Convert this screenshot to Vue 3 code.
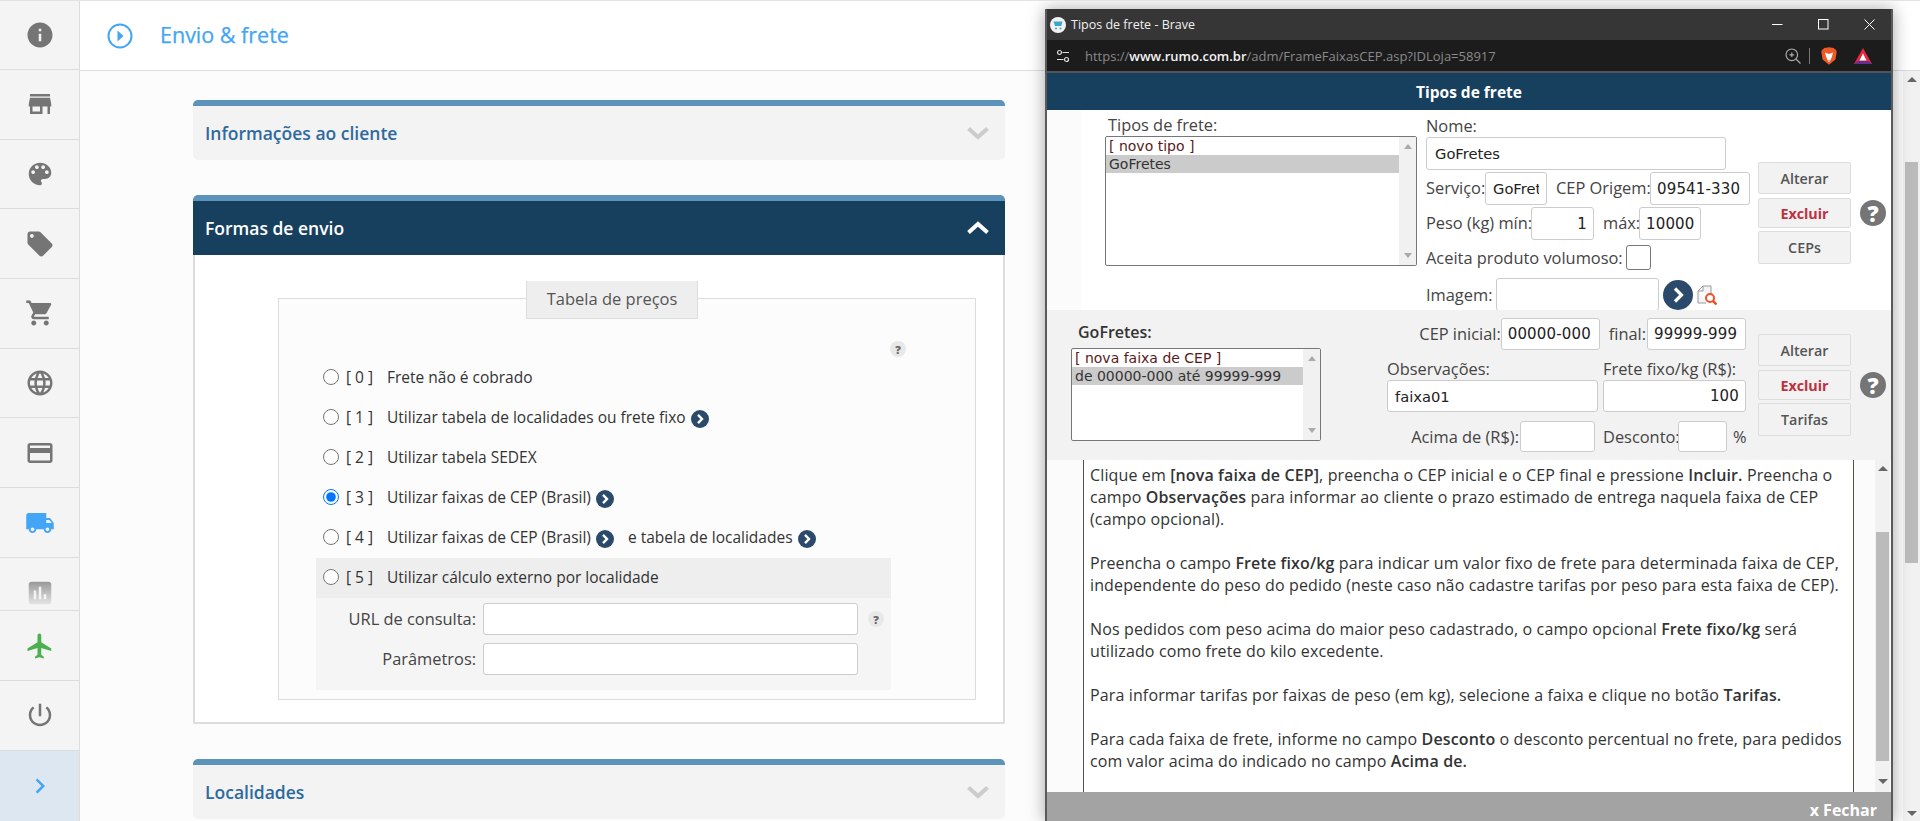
<script setup>
const navItems = [
  { d: 'M12 2C6.48 2 2 6.48 2 12s4.48 10 10 10 10-4.48 10-10S17.52 2 12 2zm1 15h-2v-6h2v6zm0-8h-2V7h2v2z', cls: 'first' },
  { d: 'M20 4H4v2h16V4zm1 10v-2l-1-5H4l-1 5v2h1v6h10v-6h4v6h2v-6h1zm-9 4H6v-4h6v4z' },
  { d: 'M12 3c-4.97 0-9 4.03-9 9s4.03 9 9 9c.83 0 1.5-.67 1.5-1.5 0-.39-.15-.74-.39-1.01-.23-.26-.38-.61-.38-.99 0-.83.67-1.5 1.5-1.5H16c2.76 0 5-2.24 5-5 0-4.42-4.03-8-9-8zm-5.5 9c-.83 0-1.5-.67-1.5-1.5S5.67 9 6.5 9 8 9.67 8 10.5 7.33 12 6.5 12zm3-4C8.67 8 8 7.33 8 6.5S8.67 5 9.5 5s1.5.67 1.5 1.5S10.33 8 9.5 8zm5 0c-.83 0-1.5-.67-1.5-1.5S13.67 5 14.5 5s1.5.67 1.5 1.5S15.33 8 14.5 8zm3 4c-.83 0-1.5-.67-1.5-1.5S16.67 9 17.5 9s1.5.67 1.5 1.5-.67 1.5-1.5 1.5z' },
  { d: 'M21.41 11.58l-9-9C12.05 2.22 11.55 2 11 2H4c-1.1 0-2 .9-2 2v7c0 .55.22 1.05.59 1.42l9 9c.36.36.86.58 1.41.58.55 0 1.05-.22 1.41-.59l7-7c.37-.36.59-.86.59-1.41 0-.55-.23-1.06-.59-1.42zM5.5 7C4.67 7 4 6.33 4 5.5S4.67 4 5.5 4 7 4.67 7 5.5 6.33 7 5.5 7z' },
  { d: 'M7 18c-1.1 0-1.99.9-1.99 2S5.9 22 7 22s2-.9 2-2-.9-2-2-2zM1 2v2h2l3.6 7.59-1.35 2.45c-.16.28-.25.61-.25.96 0 1.1.9 2 2 2h12v-2H7.42c-.14 0-.25-.11-.25-.25l.03-.12.9-1.63h7.45c.75 0 1.41-.41 1.75-1.03l3.58-6.49c.08-.14.12-.31.12-.48 0-.55-.45-1-1-1H5.21l-.94-2H1zm16 16c-1.1 0-1.99.9-1.99 2s.89 2 1.99 2 2-.9 2-2-.9-2-2-2z' },
  { d: 'M11.99 2C6.47 2 2 6.48 2 12s4.47 10 9.99 10C17.52 22 22 17.52 22 12S17.52 2 11.99 2zm6.93 6h-2.95c-.32-1.25-.78-2.45-1.38-3.56 1.84.63 3.37 1.91 4.33 3.56zM12 4.04c.83 1.2 1.48 2.53 1.91 3.96h-3.82c.43-1.43 1.08-2.76 1.91-3.96zM4.26 14C4.1 13.36 4 12.69 4 12s.1-1.36.26-2h3.38c-.08.66-.14 1.32-.14 2 0 .68.06 1.34.14 2H4.26zm.82 2h2.95c.32 1.25.78 2.45 1.38 3.56-1.84-.63-3.37-1.9-4.33-3.56zm2.95-8H5.08c.96-1.66 2.49-2.93 4.33-3.56C8.81 5.55 8.35 6.75 8.03 8zM12 19.96c-.83-1.2-1.48-2.53-1.91-3.96h3.82c-.43 1.43-1.08 2.76-1.91 3.96zM14.34 14H9.66c-.09-.66-.16-1.32-.16-2 0-.68.07-1.35.16-2h4.68c.09.65.16 1.32.16 2 0 .68-.07 1.34-.16 2zm.25 5.56c.6-1.11 1.06-2.31 1.38-3.56h2.95c-.96 1.65-2.49 2.93-4.33 3.56zM16.36 14c.08-.66.14-1.32.14-2 0-.68-.06-1.34-.14-2h3.38c.16.64.26 1.31.26 2s-.1 1.36-.26 2h-3.38z' },
  { d: 'M20 4H4c-1.11 0-1.99.89-1.99 2L2 18c0 1.11.89 2 2 2h16c1.11 0 2-.89 2-2V6c0-1.11-.89-2-2-2zm0 14H4v-6h16v6zm0-10H4V6h16v2z' },
  { d: 'M20 8h-3V4H3c-1.1 0-2 .9-2 2v11h2c0 1.66 1.34 3 3 3s3-1.34 3-3h6c0 1.66 1.34 3 3 3s3-1.34 3-3h2v-5l-3-4zM6 18.5c-.83 0-1.5-.67-1.5-1.5s.67-1.5 1.5-1.5 1.5.67 1.5 1.5-.67 1.5-1.5 1.5zm13.5-9l1.96 2.5H17V9.5h2.5zm-1.5 9c-.83 0-1.5-.67-1.5-1.5s.67-1.5 1.5-1.5 1.5.67 1.5 1.5-.67 1.5-1.5 1.5z', cls: 'blue' },
  { d: 'M19 3H5c-1.1 0-2 .9-2 2v14c0 1.1.9 2 2 2h14c1.1 0 2-.9 2-2V5c0-1.1-.9-2-2-2zM9 17H7v-7h2v7zm4 0h-2V7h2v10zm4 0h-2v-4h2v4z', cls: 'short' },
  { d: 'M21 16v-2l-8-5V3.5c0-.83-.67-1.5-1.5-1.5S10 2.67 10 3.5V9l-8 5v2l8-2.5V19l-2 1.5V22l3.5-1 3.5 1v-1.5L13 19v-5.5l8 2.5z', cls: 'green' },
  { d: 'M13 3h-2v10h2V3zm4.83 2.17l-1.42 1.42C17.99 7.86 19 9.81 19 12c0 3.87-3.13 7-7 7s-7-3.13-7-7c0-2.19 1.01-4.14 2.58-5.42L6.17 5.17C4.23 6.82 3 9.26 3 12c0 4.97 4.03 9 9 9s9-4.03 9-9c0-2.74-1.23-5.18-3.17-6.83z' },
  { d: 'M10 6L8.59 7.41 13.17 12l-4.58 4.59L10 18l6-6z', cls: 'last' }
]
const radios = [
  { n: 0, text: 'Frete não é cobrado' },
  { n: 1, text: 'Utilizar tabela de localidades ou frete fixo', arrow: true },
  { n: 2, text: 'Utilizar tabela SEDEX' },
  { n: 3, text: 'Utilizar faixas de CEP (Brasil)', arrow: true, checked: true },
  { n: 4, text: 'Utilizar faixas de CEP (Brasil)', arrow: true, extra: 'e tabela de localidades' },
  { n: 5, text: 'Utilizar cálculo externo por localidade', shade: true }
]
</script>

<template>
  <div class="page">
    <nav class="side">
      <div v-for="(it, i) in navItems" :key="i" class="nav" :class="it.cls">
        <svg viewBox="0 0 24 24" width="30" height="30"><defs><linearGradient id="fade" x1="0" y1="0" x2="0" y2="1"><stop offset="0" stop-color="#999"/><stop offset="1" stop-color="#e4e4e4"/></linearGradient></defs><path :d="it.d"/></svg>
      </div>
    </nav>

    <div class="main">
      <header class="top">
        <svg class="play" viewBox="0 0 26 26" width="26" height="26"><circle cx="13" cy="13" r="11.5" fill="none" stroke="#42a5f5" stroke-width="2"/><path d="M10.5 7.5 16.5 13l-6 5.5z" fill="#42a5f5"/></svg>
        <h1>Envio &amp; frete</h1>
      </header>
      <div class="below">
        <div class="content">
          <section class="panel">
            <div class="phead"><span>Informações ao cliente</span><svg class="chev" viewBox="0 0 24 14" width="24" height="14"><path d="M2.5 2.5 12 11l9.500-8.500" fill="none" stroke="#ccc" stroke-width="4"/></svg></div>
          </section>

          <section class="panel open">
            <div class="phead dark"><span>Formas de envio</span><svg class="chev" viewBox="0 0 24 14" width="24" height="14"><path d="M2.500 11.500 12 3l9.500 8.500" fill="none" stroke="#fff" stroke-width="4"/></svg></div>
            <div class="pbody">
              <div class="box">
                <div class="legend">Tabela de preços</div>
                <div class="qrow"><span class="q">?</span></div>
                <div v-for="r in radios" :key="r.n" class="rrow" :class="{ shade: r.shade }">
                  <input type="radio" name="tabela" :checked="r.checked">
                  <span class="num">[ {{ r.n }} ]</span>
                  <span>{{ r.text }}</span>
                  <svg v-if="r.arrow" class="arr" viewBox="0 0 18 18" width="18" height="18"><circle cx="9" cy="9" r="9" fill="#2b4a6b"/><path d="M7 4.800 11 9l-4 4.200" fill="none" stroke="#fff" stroke-width="2.400"/></svg>
                  <template v-if="r.extra">
                    <span class="extra">{{ r.extra }}</span>
                    <svg class="arr" viewBox="0 0 18 18" width="18" height="18"><circle cx="9" cy="9" r="9" fill="#2b4a6b"/><path d="M7 4.800 11 9l-4 4.200" fill="none" stroke="#fff" stroke-width="2.400"/></svg>
                  </template>
                </div>
                <div class="sub">
                  <div class="frow"><label>URL de consulta:</label><input class="fin" type="text"><span class="q small">?</span></div>
                  <div class="frow"><label>Parâmetros:</label><input class="fin" type="text"></div>
                </div>
              </div>
            </div>
          </section>

          <section class="panel">
            <div class="phead"><span>Localidades</span><svg class="chev" viewBox="0 0 24 14" width="24" height="14"><path d="M2.500 2.500 12 11l9.500-8.500" fill="none" stroke="#ccc" stroke-width="4"/></svg></div>
          </section>
        </div>
        <div class="mainbar">
          <i class="up"></i>
          <div class="mthumb"></div>
          <i class="down"></i>
        </div>
      </div>
    </div>

    <!-- popup window -->
    <div class="popup">
      <div class="titlebar">
        <svg viewBox="0 0 16 16" width="16" height="16"><circle cx="8" cy="8" r="8" fill="#f2f2f2"/><path d="M3.500 4.500h9l-1.200 4.500H5z" fill="#3ba7c6"/><circle cx="6" cy="11.500" r="1" fill="#3ba7c6"/><circle cx="10.500" cy="11.500" r="1" fill="#3ba7c6"/></svg>
        <span class="wtitle">Tipos de frete - Brave</span>
        <span class="grow"></span>
        <svg class="wc" viewBox="0 0 11 11" width="11" height="11"><path d="M0 5.500h10.500" stroke="#fff" stroke-width="1"/></svg>
        <svg class="wc" viewBox="0 0 11 11" width="11" height="11"><rect x=".5" y=".5" width="9.500" height="9.500" fill="none" stroke="#fff"/></svg>
        <svg class="wc" viewBox="0 0 11 11" width="11" height="11"><path d="M.5.500l10 10M10.500.500l-10 10" stroke="#fff"/></svg>
      </div>
      <div class="urlbar">
        <svg viewBox="0 0 14 14" width="14" height="14"><g fill="none" stroke="#ddd" stroke-width="1.200"><circle cx="3.500" cy="3.500" r="2"/><circle cx="10.500" cy="10.500" r="2"/><path d="M6.500 3.500H13M1 10.500h6.500"/></g></svg>
        <span class="url">https://<b>www.rumo.com.br</b>/adm/FrameFaixasCEP.asp?IDLoja=58917</span>
        <span class="grow"></span>
        <svg viewBox="0 0 16 16" width="16" height="16"><g fill="none" stroke="#aaa" stroke-width="1.200"><circle cx="6.800" cy="6.800" r="5.800"/><path d="M11 11l4.500 4.500M4.500 6.800h4.600M6.800 4.500v4.600"/></g></svg>
        <span class="sep"></span>
        <svg class="brave" viewBox="0 0 16 18" width="16" height="18"><path d="M3.500 1 8 .3 12.500 1 15 3l.7 2-1.300 7.500L8 17.700 1.600 12.500.3 5 1 3z" fill="#f15a22"/><path d="M4 5.500 8 7l4-1.500-1 4-1.500 3.500h-3L5 9.500z" fill="#fff"/><path d="M6.500 13.500 8 15l1.500-1.500z" fill="#fff"/></svg>
        <svg class="bat" viewBox="0 0 18 16" width="18" height="16"><path d="M9 0 18 16H0z" fill="#e8283c"/><path d="M0 16 3.500 13h11l3.500 3z" fill="#662d91"/><path d="M9 5.500 12.500 12.500h-7z" fill="#fff"/></svg>
      </div>
      <div class="phdr">Tipos de frete</div>

      <div class="upper">
        <div class="upper-in">
          <div class="lcol">
            <div class="ltitle">Tipos de frete:</div>
            <div class="list l1">
              <div class="items">
                <div class="opt">[ novo tipo ]</div>
                <div class="opt sel">GoFretes</div>
              </div>
              <div class="lbar"><i class="up"></i><i class="down"></i></div>
            </div>
          </div>
          <div class="fcol">
            <div class="flab">Nome:</div>
            <div class="line"><input class="tin w-name" value="GoFretes"></div>
            <div class="line"><span class="l-serv">Serviço:</span><input class="tin w-serv" value="GoFretes"><span class="l-cep">CEP Origem:</span><input class="tin w-cep nums" value="09541-330"></div>
            <div class="line"><span class="l-peso">Peso (kg) mín:</span><input class="tin w-min r nums" value="1"><span class="l-max">máx:</span><input class="tin w-max nums" value="10000"></div>
            <div class="line l4"><span class="l-ace">Aceita produto volumoso:</span><span class="check"></span></div>
            <div class="line l5"><span class="l-img">Imagem:</span><input class="tin w-img"><svg class="circle" viewBox="0 0 30 30" width="30" height="30"><circle cx="15" cy="15" r="15" fill="#2b4a6b"/><path d="M12 8.500 18.500 15 12 21.500" fill="none" stroke="#fff" stroke-width="3.200"/></svg><svg class="doc" viewBox="0 0 20 20" width="20" height="20"><path d="M1 6 6 1h8v8M1 6v12h8M1 6h5V1" fill="#f4f4f4" stroke="#999"/><circle cx="13" cy="13" r="4" fill="#fff" stroke="#f0502a" stroke-width="2"/><path d="M16 16l3.500 3.500" stroke="#f0502a" stroke-width="2.500"/></svg></div>
          </div>
          <div class="bcol">
            <button class="btn">Alterar</button>
            <button class="btn ex">Excluir</button>
            <button class="btn b3">CEPs</button>
          </div>
          <span class="bighelp">?</span>
        </div>
      </div>

      <div class="lower">
        <div class="lcol2">
          <div class="ltitle2">GoFretes:</div>
          <div class="list l2">
            <div class="items">
              <div class="opt">[ nova faixa de CEP ]</div>
              <div class="opt sel">de 00000-000 até 99999-999</div>
            </div>
            <div class="lbar"><i class="up"></i><i class="down"></i></div>
          </div>
        </div>
        <div class="fcol2">
          <div class="line2 end"><span>CEP inicial:</span><input class="tin w-c nums" value="00000-000"><span class="fin-l">final:</span><input class="tin w-c nums" value="99999-999"></div>
          <div class="grid2">
            <label>Observações:</label><label>Frete fixo/kg (R$):</label>
            <input class="tin full" value="faixa01"><input class="tin full r nums" value="100">
            <div class="acell"><span>Acima de (R$):</span><input class="tin w-ac"></div>
            <div class="dcell"><span class="l-des">Desconto:</span><input class="tin w-de"><span class="pct">%</span></div>
          </div>
        </div>
        <div class="bcol low">
          <button class="btn">Alterar</button>
          <button class="btn ex">Excluir</button>
          <button class="btn b3">Tarifas</button>
        </div>
        <span class="bighelp low">?</span>
      </div>

      <div class="helpwrap">
        <div class="help">
          Clique em <b>[nova faixa de CEP]</b>, preencha o CEP inicial e o CEP final e pressione <b>Incluir.</b> Preencha o<br>
          campo <b>Observações</b> para informar ao cliente o prazo estimado de entrega naquela faixa de CEP<br>
          (campo opcional).<br><br>
          Preencha o campo <b>Frete fixo/kg</b> para indicar um valor fixo de frete para determinada faixa de CEP,<br>
          independente do peso do pedido (neste caso não cadastre tarifas por peso para esta faixa de CEP).<br><br>
          Nos pedidos com peso acima do maior peso cadastrado, o campo opcional <b>Frete fixo/kg</b> será<br>
          utilizado como frete do kilo excedente.<br><br>
          Para informar tarifas por faixas de peso (em kg), selecione a faixa e clique no botão <b>Tarifas.</b><br><br>
          Para cada faixa de frete, informe no campo <b>Desconto</b> o desconto percentual no frete, para pedidos<br>
          com valor acima do indicado no campo <b>Acima de.</b>
        </div>
        <div class="hbar"><i class="up"></i><div class="hthumb"></div><i class="down"></i></div>
      </div>
      <div class="foot">x Fechar</div>
    </div>
  </div>
</template>

<style>
html, body { margin: 0; overflow: hidden; }
</style>

<style scoped>
* { box-sizing: border-box; }
.page { width: 1920px; height: 821px; display: flex; overflow: hidden; position: relative; background: #fcfcfc; border-top: 1px solid #e2e2e2; font-family: "Open Sans", sans-serif; color: #333; font-size: 15.5px; }
.grow { flex: 1; }

.side { width: 80px; flex: none; background: #f4f4f4; border-right: 1px solid #ddd; display: flex; flex-direction: column; }
.nav { flex: 0 0 69.7px; border-bottom: 1px solid #ddd; display: flex; align-items: center; justify-content: center; fill: #757575; }
.nav.first { flex-basis: 69px; }
.nav.blue { fill: #42a5f5; padding-top: 2px; }
.nav.short { flex-basis: 53.4px; align-items: flex-start; padding-top: 20px; fill: url(#fade); }
.nav.green { fill: #4caf50; }
.nav.last { flex: 1; background: #dce7f1; fill: #42a5f5; border-bottom: none; }

.main { flex: 1; display: flex; flex-direction: column; min-width: 0; }
.top { height: 70px; background: #fff; border-bottom: 1px solid #ddd; display: flex; align-items: center; padding-left: 27px; flex: none; }
.top h1 { margin: 0 0 2px 27px; font-size: 21.5px; font-weight: 500; color: #42a5f5; -webkit-text-stroke: .25px #42a5f5; }
.below { flex: 1; display: flex; min-height: 0; }
.content { flex: 1; padding: 29px 0 0 113px; min-width: 0; }
.panel { width: 812px; margin-bottom: 35px; }
.phead { height: 60px; border-top: 6px solid #5b93bb; border-radius: 5px; background: #f3f3f3; display: flex; align-items: center; justify-content: space-between; padding: 0 15px 0 12px; color: #2e6a9e; font-weight: 600; }
.phead span { font-size: 17.5px; margin-bottom: 1px; }
.phead.dark { background: #17405f; color: #fff; border-radius: 5px 5px 0 0; }
.pbody { background: #fff; border: 2px solid #ddd; border-top: none; height: 469px; padding: 43px 0 0 83px; }
.box { width: 698px; height: 402px; border: 1px solid #ddd; background: #fcfcfc; }
.legend { margin: -18px 0 0 247px; width: 172px; height: 38px; padding-bottom: 2px; background: #eee; border: 1px solid #ddd; border-top: none; display: flex; align-items: center; justify-content: center; font-weight: 500; color: #555; font-size: 16.5px; }
.qrow { margin-top: 22px; height: 17px; display: flex; justify-content: flex-end; padding-right: 69px; }
.q { width: 16px; height: 16px; border-radius: 50%; background: #e8e8e8; color: #666; display: flex; align-items: center; justify-content: center; font-size: 11px; font-weight: 800; flex: none; }
.rrow { height: 40px; margin-left: 37px; width: 575px; padding: 0 0 2px 7px; display: flex; align-items: center; color: #333; white-space: nowrap; }
.rrow input { width: 16px; height: 16px; margin: 0 7px 0 0; flex: none; accent-color: #0075ff; }
.rrow.shade { background: #eee; }
.num { width: 41px; flex: none; color: #333; }
.arr { margin-left: 5px; margin-top: 3px; flex: none; }
.extra { margin-left: 14px; }
.sub { margin-left: 37px; width: 575px; height: 92px; background: #f5f5f5; padding-top: 5px; }
.frow { display: flex; align-items: center; height: 32px; margin-bottom: 8px; }
.frow label { width: 160px; text-align: right; flex: none; color: #444; font-size: 16.4px; margin-top: -2px; white-space: nowrap; }
.fin { width: 375px; height: 32px; margin-left: 7px; border: 1px solid #ccc; border-radius: 3px; background: #fff; }
.q.small { margin-left: 10px; }

.mainbar { width: 17px; flex: none; position: relative; background: #f1f1f1; display: flex; flex-direction: column; align-items: center; padding: 6px 0 5px; margin-right: 0; }
.mthumb { width: 13px; height: 401px; background: #bbb; margin-top: 80px; }
.mainbar .down { margin-top: auto; }
.up, .down { display: block; width: 0; height: 0; border-left: 5px solid transparent; border-right: 5px solid transparent; flex: none; }
.up { border-bottom: 5px solid #666; }
.down { border-top: 5px solid #666; }

.popup { position: absolute; left: 1045px; top: 8px; width: 848px; height: 813px; background: #fff; border-left: 2px solid #5a5a5a; border-right: 2px solid #5a5a5a; box-shadow: 0 0 16px rgba(0,0,0,.35); display: flex; flex-direction: column; overflow: hidden; }
.titlebar { height: 31px; flex: none; background: #363636; display: flex; align-items: center; padding: 0 16px 0 3px; color: #f0f0f0; font-size: 12.5px; }
.wtitle { margin-left: 5px; }
.wc { margin-left: 35px; }
.urlbar { height: 33px; flex: none; background: #1c1c1c; border-bottom: 2px solid #555; display: flex; align-items: center; padding: 0 19px 0 9px; }
.url { margin-left: 15px; color: #8a8a8a; font-size: 13px; white-space: nowrap; }
.url b { color: #f2f2f2; font-weight: 600; }
.sep { width: 1px; height: 16px; background: #777; margin: 0 11px 0 8px; }
.bat { margin-left: 17px; }
.phdr { height: 37px; flex: none; background: #17405f; color: #fff; font-weight: 700; font-size: 15.5px; display: flex; align-items: center; justify-content: center; padding-right: 0; }

.upper { height: 200px; flex: none; background: #fbfbfb; overflow: hidden; }
.upper-in { margin-left: 34px; height: 200px; background: #fff; padding-left: 24px; display: flex; align-items: flex-start; }
.lcol { width: 312px; flex: none; }
.ltitle { height: 26px; padding-left: 3px; font-size: 16.4px; line-height: 30px; color: #444; white-space: nowrap; }
.list { border: 1px solid #777; border-radius: 2px; background: #fff; display: flex; font-family: "DejaVu Sans", sans-serif; font-size: 14px; overflow: hidden; }
.l1 { height: 130px; }
.l2 { height: 93px; width: 250px; }
.items { flex: 1; min-width: 0; }
.opt { height: 18px; line-height: 18px; padding-left: 3px; color: #5a1a1a; white-space: nowrap; }
.opt.sel { background: #cbcbcb; color: #333; }
.lbar { width: 17px; flex: none; background: #f1f1f1; display: flex; flex-direction: column; align-items: center; justify-content: space-between; padding: 7px 0; }
.lbar .up { border-bottom-color: #aaa; border-left-width: 4px; border-right-width: 4px; }
.lbar .down { border-top-color: #aaa; border-left-width: 4px; border-right-width: 4px; }

.fcol { width: 332px; margin-left: 9px; flex: none; font-size: 16.4px; color: #444; }
.flab { height: 27px; line-height: 32px; }
.line { display: flex; align-items: center; height: 33px; margin-bottom: 2px; white-space: nowrap; }
.line > span { flex: none; margin-top: -2px; }
.line.l5 { margin-top: 3px; }
.line.l5 > span { margin-top: 0; }
.tin { height: 33px; border: 1px solid #ccc; border-radius: 3px; background: #fff; padding: 0 7px; font-family: "DejaVu Sans", sans-serif; font-size: 14.7px; color: #222; min-width: 0; outline: none; flex: none; }
.tin.r { text-align: right; }
.tin.nums { font-size: 15px; letter-spacing: .15px; padding: 0 6px; }
.w-name { width: 300px; padding-left: 8px; }
.w-serv { width: 62px; }
.w-cep { width: 100px; }
.w-min { width: 63px; }
.w-max { width: 62px; }
.w-img { width: 163px; }
.l-serv { width: 59px; }
.l-cep { width: 103px; padding-left: 9px; }
.l-peso { width: 105px; }
.l-max { width: 45px; padding-left: 9px; }
.l-ace { width: 200px; }
.l-img { width: 70px; }
.check { width: 25px; height: 25px; border: 1px solid #777; border-radius: 3px; background: #fff; }
.circle { margin-left: 4px; flex: none; }
.doc { margin-left: 4px; flex: none; }
.bcol { width: 93px; flex: none; margin-top: 52px; display: flex; flex-direction: column; }
.btn { height: 32px; width: 93px; padding: 0; background: #f2f2f2; border: 1px solid #ddd; border-radius: 2px; font-family: "Open Sans", sans-serif; font-size: 14.3px; font-weight: 600; color: #555; }
.btn.ex { height: 30px; margin: 4px 0 3px; color: #c0303f; font-weight: 700; }
.btn.b3 { height: 33px; }
.bighelp { width: 26px; height: 26px; border-radius: 50%; background: #757575; color: #fff; font-weight: 800; font-size: 22px; line-height: 1; display: flex; align-items: center; justify-content: center; margin: 90px 0 0 9px; flex: none; }

.lower { height: 150px; flex: none; background: #f2f2f2; display: flex; align-items: flex-start; padding-left: 24px; font-size: 16.4px; color: #444; overflow: hidden; }
.lcol2 { width: 250px; flex: none; }
.ltitle2 { height: 38px; padding-left: 7px; font-weight: 600; font-size: 16px; line-height: 44px; color: #333; white-space: nowrap; }
.fcol2 { width: 359px; flex: none; margin-left: 66px; padding-top: 8px; }
.line2 { height: 32px; display: flex; align-items: center; white-space: nowrap; }
.line2 span { margin-top: -2px; }
.line2.end { justify-content: flex-end; }
.w-c { width: 99px; height: 32px; }
.fin-l { margin: 0 1px 0 9px; }
.grid2 { display: grid; grid-template-columns: 211px 143px; column-gap: 5px; grid-template-rows: 30px 32px 40px; }
.grid2 label { align-self: end; line-height: 22px; white-space: nowrap; }
.full { width: 100%; height: 32px; }
.acell, .dcell { display: flex; align-items: flex-end; white-space: nowrap; line-height: 25px; }
.acell > span, .dcell > span { margin-bottom: 3px; }
.acell { justify-content: flex-end; padding-right: 3px; }
.l-des { width: 75px; flex: none; }
.w-ac { width: 75px; height: 31px; margin-left: 1px; }
.w-de { width: 49px; height: 31px; }
.pct { margin-left: 6px; }
.bcol.low { margin: 24px 0 0 12px; }
.bighelp.low { margin: 62px 0 0 9px; }

.helpwrap { height: 332px; flex: none; background: #fbfbfb; display: flex; padding-left: 36px; overflow: hidden; }
.help { width: 771px; flex: none; background: #fff; border-left: 1px solid #55524a; border-right: 1px solid #55524a; padding: 4px 0 0 6px; font-size: 16px; letter-spacing: .13px; line-height: 22px; color: #333; white-space: nowrap; }
.help b { font-weight: 600; }
.hbar { width: 15px; margin-left: 21px; flex: none; background: #f1f1f1; display: flex; flex-direction: column; align-items: center; padding: 6px 0 8px; }
.hthumb { width: 13px; height: 229px; background: #bbb; margin: 61px 0 0 0; }
.hbar .down { margin-top: auto; }
.foot { flex: 1; background: #a3a3a3; color: #fff; font-weight: 700; font-size: 16px; text-align: right; padding: 7px 14px 0 0; white-space: nowrap; }
</style>
